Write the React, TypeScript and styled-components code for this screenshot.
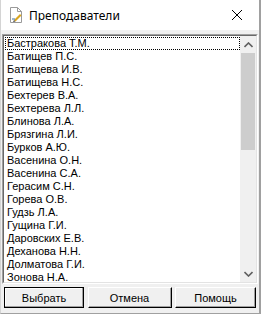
import React from 'react';
import styled, { createGlobalStyle } from 'styled-components';

const GlobalStyle = createGlobalStyle`
  html, body {
    margin: 0;
    padding: 0;
    background: #f0f0f0;
  }
`;

const Window = styled.div`
  width: 261px;
  height: 314px;
  box-sizing: border-box;
  display: flex;
  flex-direction: column;
  background: #f0f0f0;
  border-right: 2px solid #a0a0a0;
  border-left: 1px solid #d4d4d4;
  border-bottom: 1px solid #a0a0a0;
  font-family: 'Liberation Sans', Arial, sans-serif;
`;

const TitleBar = styled.div`
  height: 30px;
  flex-shrink: 0;
  display: flex;
  align-items: center;
  background: #ffffff;
  padding: 0 0 0 7px;
`;

const TitleText = styled.span`
  flex: 1;
  margin-left: 5px;
  font-family: 'Noto Sans', 'Open Sans', sans-serif;
  font-size: 12px;
  color: #000;
`;

const CloseButton = styled.div`
  width: 45px;
  height: 30px;
  display: flex;
  align-items: center;
  justify-content: center;
`;

const Body = styled.div`
  flex: 1;
  display: flex;
  flex-direction: column;
  padding: 4px 1px 0 1px;
`;

const ListBox = styled.div`
  height: 250px;
  box-sizing: border-box;
  display: flex;
  background: #ffffff;
  border-top: 1px solid #a0a0a0;
  border-left: 1px solid #a0a0a0;
  border-right: 1px solid #ffffff;
  border-bottom: 1px solid #ffffff;
`;

const ListInner = styled.div`
  flex: 1;
  display: flex;
  border-top: 1px solid #696969;
  border-left: 1px solid #696969;
  border-right: 1px solid #e3e3e3;
  border-bottom: 1px solid #e3e3e3;
`;

const Items = styled.div`
  flex: 1;
  display: flex;
  flex-direction: column;
  padding: 1px 0 0 1px;
  overflow: hidden;
`;

const Item = styled.div<{ $focused?: boolean }>`
  height: 13px;
  line-height: 13px;
  flex-shrink: 0;
  padding-left: 2px;
  font-size: 11px;
  color: #000;
  white-space: nowrap;
  box-sizing: border-box;
  outline: ${(p) => (p.$focused ? '1px dotted #000' : 'none')};
  outline-offset: -1px;
`;

const ScrollBar = styled.div`
  width: 16px;
  display: flex;
  flex-direction: column;
  background: #f0f0f0;
`;

const ArrowButton = styled.div`
  height: 17px;
  display: flex;
  align-items: center;
  justify-content: center;
`;

const Track = styled.div`
  flex: 1;
  display: flex;
  flex-direction: column;
  padding: 0 1px;
`;

const Thumb = styled.div`
  height: 97px;
  background: #cdcdcd;
`;

const ButtonRow = styled.div`
  display: flex;
  justify-content: space-between;
  padding: 3px 2px 0 2px;
`;

const Button = styled.div<{ $default?: boolean; $width: number }>`
  width: ${(p) => p.$width}px;
  height: 21px;
  box-sizing: border-box;
  display: flex;
  align-items: center;
  justify-content: center;
  font-size: 11px;
  color: #000;
  background: #f0f0f0;
  border: 1px solid ${(p) => (p.$default ? '#000' : '#ffffff')};
  border-right-color: #000;
  border-bottom-color: #000;
  box-shadow: inset -1px -1px 0 #a0a0a0, inset 1px 1px 0 ${(p) => (p.$default ? '#ffffff' : '#f0f0f0')};
`;

const teachers = [
  'Бастракова Т.М.',
  'Батищев П.С.',
  'Батищева И.В.',
  'Батищева Н.С.',
  'Бехтерев В.А.',
  'Бехтерева Л.Л.',
  'Блинова Л.А.',
  'Брязгина Л.И.',
  'Бурков А.Ю.',
  'Васенина О.Н.',
  'Васенина С.А.',
  'Герасим С.Н.',
  'Горева О.В.',
  'Гудзь Л.А.',
  'Гущина Г.И.',
  'Даровских Е.В.',
  'Деханова Н.Н.',
  'Долматова Г.И.',
  'Зонова Н.А.',
];

const DocIcon = () => (
  <svg width="16" height="16" viewBox="0 0 16 16">
    <path d="M2.5 0.5 H9.5 L13.5 4.5 V15.5 H2.5 Z" fill="#fff" stroke="#9a9a9a" />
    <path d="M9.5 0.5 V4.5 H13.5" fill="none" stroke="#9a9a9a" />
    <path d="M6 13 L12 7 L13.5 8.5 L7.5 14.5 Z" fill="#d9a520" />
    <path d="M5 15 L6 13 L7.5 14.5 Z" fill="#444" />
    <path d="M4 12 H7" stroke="#3a6ea5" strokeWidth="1" />
  </svg>
);

const App: React.FC = () => {
  return (
    <>
      <GlobalStyle />
      <Window>
        <TitleBar>
          <DocIcon />
          <TitleText>Преподаватели</TitleText>
          <CloseButton>
            <svg width="10" height="10" viewBox="0 0 10 10">
              <path d="M0 0 L10 10 M10 0 L0 10" stroke="#000" strokeWidth="1" />
            </svg>
          </CloseButton>
        </TitleBar>
        <Body>
          <ListBox>
            <ListInner>
              <Items>
                {teachers.map((name, index) => (
                  <Item key={index} $focused={index === 0}>
                    {name}
                  </Item>
                ))}
              </Items>
              <ScrollBar>
                <ArrowButton>
                  <svg width="9" height="6" viewBox="0 0 9 6">
                    <path d="M0.5 5 L4.5 1 L8.5 5" fill="none" stroke="#606060" strokeWidth="1.6" />
                  </svg>
                </ArrowButton>
                <Track>
                  <Thumb />
                </Track>
                <ArrowButton>
                  <svg width="9" height="6" viewBox="0 0 9 6">
                    <path d="M0.5 1 L4.5 5 L8.5 1" fill="none" stroke="#606060" strokeWidth="1.6" />
                  </svg>
                </ArrowButton>
              </ScrollBar>
            </ListInner>
          </ListBox>
          <ButtonRow>
            <Button $default $width={80}>Выбрать</Button>
            <Button $width={84}>Отмена</Button>
            <Button $width={81}>Помощь</Button>
          </ButtonRow>
        </Body>
      </Window>
    </>
  );
};

export default App;
